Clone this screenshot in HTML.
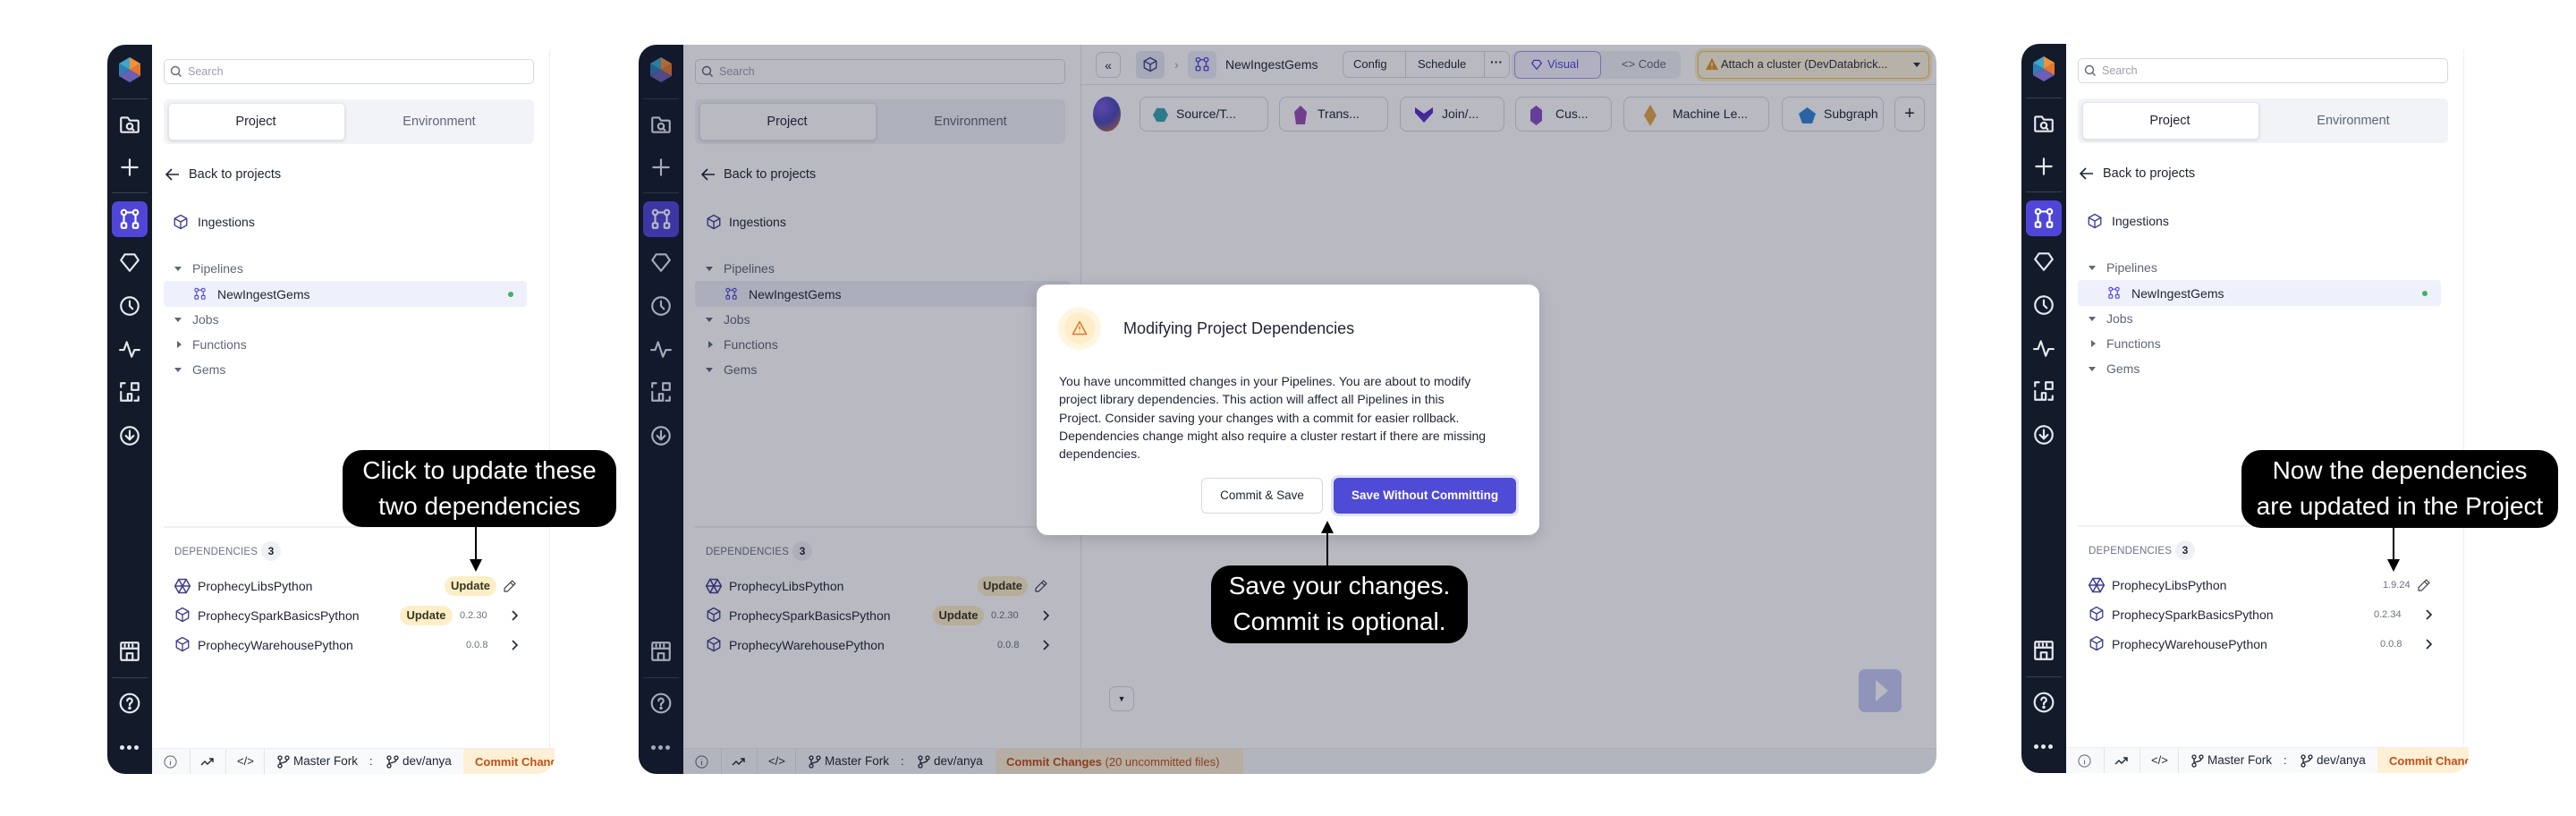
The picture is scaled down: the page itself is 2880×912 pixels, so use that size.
<!DOCTYPE html>
<html><head><meta charset="utf-8">
<style>
*{box-sizing:border-box;margin:0;padding:0}
body{width:2880px;height:912px;background:#fff;position:relative;overflow:hidden;font-family:"Liberation Sans",Arial,sans-serif;color:#1f2433}
.a{position:absolute}
.panel{position:absolute;overflow:hidden;background:#fff;border-radius:20px}
.rail{position:absolute;left:0;top:0;width:50px;height:100%;background:#131a2a}
.ri{position:absolute;left:12px;width:26px;height:26px;color:#e6e8ef}
.ri svg{width:26px;height:26px;fill:none;stroke:currentColor;stroke-width:2;stroke-linecap:round;stroke-linejoin:round}
.rsep{position:absolute;left:5px;width:40px;height:1px;background:#3a4152}
.t{position:absolute;white-space:nowrap;font-size:14px;line-height:18px}
.g{color:#5f6678}
.search{position:absolute;left:63px;top:16px;width:414px;height:28px;border:1px solid #d5d8e0;border-radius:5px;background:#fff}
.tabs{position:absolute;left:63px;top:61px;width:414px;height:50px;background:#f1f3f7;border-radius:6px}
.tabw{position:absolute;left:5px;top:4px;width:198px;height:42px;background:#fff;border-radius:5px;border:1px solid #e2e4ea;box-shadow:0 1px 3px rgba(0,0,0,.12)}
.pill{position:absolute;height:22px;border-radius:11px;background:#fcefc7;color:#3b3422;font-size:13px;line-height:22px;text-align:center;font-weight:bold}
.ver{position:absolute;font-size:11px;color:#6b7280;line-height:14px}
.status{position:absolute;left:50px;top:786px;width:450px;height:29px;background:#f8f9fb;border-top:1px solid #eceef2}
.callout{position:absolute;background:#000;color:#fff;border-radius:22px;font-size:28px;line-height:40px;text-align:center;padding-top:3px}
svg.ico{fill:none;stroke:currentColor;stroke-width:1.8;stroke-linecap:round;stroke-linejoin:round}
.btn{position:absolute;border:1px solid #d6d8df;border-radius:7px;background:#fff;font-size:13px;line-height:28px;text-align:center;color:#1f2433}
.gem{position:absolute;top:58px;height:39px;border:1px solid #d6d8df;border-radius:8px;background:#fff;font-size:14px;line-height:37px;color:#1f2433}
</style></head><body>

<!-- ================= PANEL 1 ================= -->
<div class="panel" style="left:120px;top:50px;width:500px;height:815px">
 <div class="rail">
  <svg class="a" style="left:9px;top:12px" width="32" height="32" viewBox="0 0 32 32"><polygon points="16,2 28,9 16,16" fill="#f0903a"/><polygon points="4,9 16,2 16,16" fill="#3fa7c9"/><polygon points="4,9 16,16 4,23" fill="#2d7fb6"/><polygon points="28,9 28,23 16,16" fill="#e5762e"/><polygon points="4,23 16,16 28,23 16,30" fill="#6a5fb4"/></svg>
  <div class="rsep" style="top:60px"></div>
  <div class="ri" style="top:76px"><svg viewBox="0 0 24 24"><path d="M3 7V19a1 1 0 0 0 1 1h16a1 1 0 0 0 1-1V9a1 1 0 0 0-1-1h-8l-2-3H4a1 1 0 0 0-1 1z"/><circle cx="12" cy="14" r="3"/><path d="M14 16l2 2"/></svg></div>
  <div class="ri" style="top:124px"><svg viewBox="0 0 24 24"><path d="M12 4v16M4 12h16"/></svg></div>
  <div class="rsep" style="top:165px"></div>
  <div class="a" style="left:5px;top:175px;width:40px;height:40px;background:#4f46d8;border-radius:7px"></div>
  <div class="ri" style="top:182px;color:#fff"><svg viewBox="0 0 24 24"><circle cx="6" cy="5" r="2.5"/><circle cx="18" cy="5" r="2.5"/><rect x="3.5" y="16" width="5" height="5" rx="1"/><rect x="15.5" y="16" width="5" height="5" rx="1"/><path d="M8.5 5h7M6 7.5v8.5M18 7.5v8.5"/></svg></div>
  <div class="ri" style="top:230px"><svg viewBox="0 0 24 24"><path d="M7 4h10l4 6-9 11-9-11z"/></svg></div>
  <div class="ri" style="top:279px"><svg viewBox="0 0 24 24"><circle cx="12" cy="12" r="9"/><path d="M12 7v5l3 3"/></svg></div>
  <div class="ri" style="top:327px"><svg viewBox="0 0 24 24"><path d="M2 13h4l3-8 5 15 3-7h5"/></svg></div>
  <div class="ri" style="top:375px"><svg viewBox="0 0 24 24"><path d="M3 7V3h4M3 14v-2M14 3h7v7h-7zM3 21v-6M3 21h6M21 17v4h-4M10 14h4v7h-4z"/></svg></div>
  <div class="ri" style="top:424px"><svg viewBox="0 0 24 24"><circle cx="12" cy="12" r="9"/><path d="M12 7v9M8 12l4 4 4-4"/></svg></div>
  <div class="ri" style="top:665px"><svg viewBox="0 0 24 24"><rect x="3" y="3" width="18" height="18" rx="1"/><path d="M3 9h18M7 5v2M11 5v2M15 5v2M9 21v-7h6v7"/></svg></div>
  <div class="rsep" style="top:707px"></div>
  <div class="ri" style="top:723px"><svg viewBox="0 0 24 24"><circle cx="12" cy="12" r="9.5"/><path d="M9.5 9.5a2.5 2.5 0 1 1 3.5 2.3c-.7.4-1 1-1 1.7v.5"/><circle cx="12" cy="17" r=".6" fill="currentColor"/></svg></div>
  <div class="a" style="left:14px;top:783px;width:22px;height:5px;"><span style="position:absolute;left:0;width:5px;height:5px;border-radius:3px;background:#e6e8ef"></span><span style="position:absolute;left:8px;width:5px;height:5px;border-radius:3px;background:#e6e8ef"></span><span style="position:absolute;left:16px;width:5px;height:5px;border-radius:3px;background:#e6e8ef"></span></div>
 </div>
 <div class="a" style="left:494px;top:0;width:1px;height:786px;background:#eceef2"></div>
 <div class="search"><svg class="a" style="left:6px;top:6px" width="14" height="14" viewBox="0 0 14 14" fill="none" stroke="#5f6678" stroke-width="1.4"><circle cx="6" cy="6" r="4.5"/><path d="M9.5 9.5l3 3"/></svg><span class="t" style="left:26px;top:4px;font-size:12.5px;color:#9aa0ad">Search</span></div>
 <div class="tabs"><div class="tabw"></div><span class="t" style="left:103px;top:16px;width:0;font-size:14.5px;"><span style="position:absolute;transform:translateX(-50%)">Project</span></span><span class="t g" style="left:308px;top:16px;font-size:14.5px"><span style="position:absolute;transform:translateX(-50%)">Environment</span></span></div>
 <svg class="a" style="left:65px;top:138px" width="16" height="14" viewBox="0 0 16 14" fill="none" stroke="#1f2433" stroke-width="1.6"><path d="M15 7H2M7 1L1 7l6 6"/></svg>
 <span class="t" style="left:91px;top:136px;font-size:14.5px">Back to projects</span>
 <svg class="a ico" style="left:73px;top:189px;color:#3f3f8f" width="18" height="18" viewBox="0 0 24 24"><path d="M12 2l9 5v10l-9 5-9-5V7z"/><path d="M3 7l9 5 9-5M12 12v10"/></svg>
 <span class="t" style="left:101px;top:189px">Ingestions</span>
 <span class="a" style="left:75px;top:248px;border-left:4px solid transparent;border-right:4px solid transparent;border-top:5px solid #5f6678"></span>
 <span class="t g" style="left:95px;top:241px">Pipelines</span>
 <div class="a" style="left:63px;top:264px;width:406px;height:29px;background:#eef0fb;border-radius:4px"></div>
 <svg class="a ico" style="left:96px;top:271px;color:#4f46d8" width="15" height="15" viewBox="0 0 24 24"><circle cx="6" cy="5" r="3"/><circle cx="18" cy="5" r="3"/><rect x="3" y="15" width="6" height="6" rx="1"/><rect x="15" y="15" width="6" height="6" rx="1"/><path d="M9 5h6M6 8v7M18 8v7" /></svg>
 <span class="t" style="left:123px;top:270px">NewIngestGems</span>
 <span class="a" style="left:448px;top:276px;width:6px;height:6px;border-radius:3px;background:#3cb55e"></span>
 <span class="a" style="left:75px;top:305px;border-left:4px solid transparent;border-right:4px solid transparent;border-top:5px solid #5f6678"></span>
 <span class="t g" style="left:95px;top:298px">Jobs</span>
 <span class="a" style="left:78px;top:331px;border-top:4px solid transparent;border-bottom:4px solid transparent;border-left:5px solid #5f6678"></span>
 <span class="t g" style="left:95px;top:326px">Functions</span>
 <span class="a" style="left:75px;top:361px;border-left:4px solid transparent;border-right:4px solid transparent;border-top:5px solid #5f6678"></span>
 <span class="t g" style="left:95px;top:354px">Gems</span>
 <div class="a" style="left:63px;top:538px;width:431px;height:2px;background:#eef0f3"></div>
 <span class="t" style="left:75px;top:558px;font-size:11.5px;color:#6b7385;letter-spacing:.2px">DEPENDENCIES</span>
 <span class="a" style="left:172px;top:555px;width:22px;height:22px;border-radius:11px;background:#eef0f4;font-size:12px;line-height:22px;text-align:center;font-weight:bold">3</span>
 <svg class="a ico" style="left:74px;top:595px;color:#3f3f8f" width="20" height="20" viewBox="0 0 24 24"><path d="M7 3h10l5 9-5 9H7l-5-9z"/><path d="M7 3l10 18M17 3L7 21M2 12h20" /></svg>
 <span class="t" style="left:101px;top:596px">ProphecyLibsPython</span>
 <div class="pill" style="left:377px;top:594px;width:58px">Update</div>
 <svg class="a ico" style="left:442px;top:597px;color:#3a3f4d" width="16" height="16" viewBox="0 0 24 24"><path d="M16 3l5 5L8 21H3v-5z M13 6l5 5"/></svg>
 <svg class="a ico" style="left:75px;top:628px;color:#3f3f8f" width="18" height="18" viewBox="0 0 24 24"><path d="M12 2l9 5v10l-9 5-9-5V7z"/><path d="M3 7l9 5 9-5M12 12v10"/></svg>
 <span class="t" style="left:101px;top:629px">ProphecySparkBasicsPython</span>
 <div class="pill" style="left:327px;top:627px;width:59px">Update</div>
 <span class="ver" style="left:394px;top:631px">0.2.30</span>
 <svg class="a" style="left:450px;top:632px" width="10" height="12" viewBox="0 0 10 12" fill="none" stroke="#1f2433" stroke-width="1.6"><path d="M3 1l5 5-5 5"/></svg>
 <svg class="a ico" style="left:75px;top:661px;color:#3f3f8f" width="18" height="18" viewBox="0 0 24 24"><path d="M12 2l9 5v10l-9 5-9-5V7z"/><path d="M3 7l9 5 9-5M12 12v10"/></svg>
 <span class="t" style="left:101px;top:662px">ProphecyWarehousePython</span>
 <span class="ver" style="left:401px;top:664px">0.0.8</span>
 <svg class="a" style="left:450px;top:665px" width="10" height="12" viewBox="0 0 10 12" fill="none" stroke="#1f2433" stroke-width="1.6"><path d="M3 1l5 5-5 5"/></svg>
 <div class="status">
  <svg class="a" style="left:13px;top:7px" width="15" height="15" viewBox="0 0 16 16" fill="none" stroke="#6b7280" stroke-width="1.2"><circle cx="8" cy="8" r="7"/><path d="M8 7v5M8 4.5v.5"/></svg>
  <div class="a" style="left:42px;top:0;width:1px;height:29px;background:#e3e5ea"></div>
  <svg class="a" style="left:54px;top:8px" width="16" height="12" viewBox="0 0 16 12" fill="none" stroke="#1f2433" stroke-width="1.4"><path d="M1 10l4-4 3 3 6-6M10 3h4v4"/></svg>
  <div class="a" style="left:82px;top:0;width:1px;height:29px;background:#e3e5ea"></div>
  <span class="t" style="left:95px;top:5px;font-size:13px">&lt;/&gt;</span>
  <div class="a" style="left:125px;top:0;width:1px;height:29px;background:#e3e5ea"></div>
  <svg class="a" style="left:140px;top:7px" width="14" height="15" viewBox="0 0 14 15" fill="none" stroke="#1f2433" stroke-width="1.3"><circle cx="3" cy="3" r="2"/><circle cx="11" cy="3" r="2"/><circle cx="3" cy="12" r="2"/><path d="M3 5v5M11 5c0 4-8 3-8 5"/></svg>
  <span class="t" style="left:158px;top:5px;font-size:13.5px">Master Fork</span>
  <span class="t" style="left:243px;top:5px;font-size:13px">:</span>
  <svg class="a" style="left:262px;top:7px" width="14" height="15" viewBox="0 0 14 15" fill="none" stroke="#1f2433" stroke-width="1.3"><circle cx="3" cy="3" r="2"/><circle cx="11" cy="3" r="2"/><circle cx="3" cy="12" r="2"/><path d="M3 5v5M11 5c0 4-8 3-8 5"/></svg>
  <span class="t" style="left:280px;top:5px;font-size:13.5px">dev/anya</span>
  <div class="a" style="left:348px;top:0;width:110px;height:29px;background:#fdf0d5"></div>
  <span class="t" style="left:361px;top:6px;font-size:13px;font-weight:bold;color:#c2501a">Commit Changes</span>
 </div>
</div>

<!-- ================= PANEL 3 ================= -->
<div class="panel" style="left:2260px;top:49px;width:500px;height:815px">
 <div class="rail">
  <svg class="a" style="left:9px;top:12px" width="32" height="32" viewBox="0 0 32 32"><polygon points="16,2 28,9 16,16" fill="#f0903a"/><polygon points="4,9 16,2 16,16" fill="#3fa7c9"/><polygon points="4,9 16,16 4,23" fill="#2d7fb6"/><polygon points="28,9 28,23 16,16" fill="#e5762e"/><polygon points="4,23 16,16 28,23 16,30" fill="#6a5fb4"/></svg>
  <div class="rsep" style="top:60px"></div>
  <div class="ri" style="top:76px"><svg viewBox="0 0 24 24"><path d="M3 7V19a1 1 0 0 0 1 1h16a1 1 0 0 0 1-1V9a1 1 0 0 0-1-1h-8l-2-3H4a1 1 0 0 0-1 1z"/><circle cx="12" cy="14" r="3"/><path d="M14 16l2 2"/></svg></div>
  <div class="ri" style="top:124px"><svg viewBox="0 0 24 24"><path d="M12 4v16M4 12h16"/></svg></div>
  <div class="rsep" style="top:165px"></div>
  <div class="a" style="left:5px;top:175px;width:40px;height:40px;background:#4f46d8;border-radius:7px"></div>
  <div class="ri" style="top:182px;color:#fff"><svg viewBox="0 0 24 24"><circle cx="6" cy="5" r="2.5"/><circle cx="18" cy="5" r="2.5"/><rect x="3.5" y="16" width="5" height="5" rx="1"/><rect x="15.5" y="16" width="5" height="5" rx="1"/><path d="M8.5 5h7M6 7.5v8.5M18 7.5v8.5"/></svg></div>
  <div class="ri" style="top:230px"><svg viewBox="0 0 24 24"><path d="M7 4h10l4 6-9 11-9-11z"/></svg></div>
  <div class="ri" style="top:279px"><svg viewBox="0 0 24 24"><circle cx="12" cy="12" r="9"/><path d="M12 7v5l3 3"/></svg></div>
  <div class="ri" style="top:327px"><svg viewBox="0 0 24 24"><path d="M2 13h4l3-8 5 15 3-7h5"/></svg></div>
  <div class="ri" style="top:375px"><svg viewBox="0 0 24 24"><path d="M3 7V3h4M3 14v-2M14 3h7v7h-7zM3 21v-6M3 21h6M21 17v4h-4M10 14h4v7h-4z"/></svg></div>
  <div class="ri" style="top:424px"><svg viewBox="0 0 24 24"><circle cx="12" cy="12" r="9"/><path d="M12 7v9M8 12l4 4 4-4"/></svg></div>
  <div class="ri" style="top:665px"><svg viewBox="0 0 24 24"><rect x="3" y="3" width="18" height="18" rx="1"/><path d="M3 9h18M7 5v2M11 5v2M15 5v2M9 21v-7h6v7"/></svg></div>
  <div class="rsep" style="top:707px"></div>
  <div class="ri" style="top:723px"><svg viewBox="0 0 24 24"><circle cx="12" cy="12" r="9.5"/><path d="M9.5 9.5a2.5 2.5 0 1 1 3.5 2.3c-.7.4-1 1-1 1.7v.5"/><circle cx="12" cy="17" r=".6" fill="currentColor"/></svg></div>
  <div class="a" style="left:14px;top:783px;width:22px;height:5px;"><span style="position:absolute;left:0;width:5px;height:5px;border-radius:3px;background:#e6e8ef"></span><span style="position:absolute;left:8px;width:5px;height:5px;border-radius:3px;background:#e6e8ef"></span><span style="position:absolute;left:16px;width:5px;height:5px;border-radius:3px;background:#e6e8ef"></span></div>
 </div>
 <div class="a" style="left:494px;top:0;width:1px;height:786px;background:#eceef2"></div>
 <div class="search"><svg class="a" style="left:6px;top:6px" width="14" height="14" viewBox="0 0 14 14" fill="none" stroke="#5f6678" stroke-width="1.4"><circle cx="6" cy="6" r="4.5"/><path d="M9.5 9.5l3 3"/></svg><span class="t" style="left:26px;top:4px;font-size:12.5px;color:#9aa0ad">Search</span></div>
 <div class="tabs"><div class="tabw"></div><span class="t" style="left:103px;top:16px;font-size:14.5px;"><span style="position:absolute;transform:translateX(-50%)">Project</span></span><span class="t g" style="left:308px;top:16px;font-size:14.5px"><span style="position:absolute;transform:translateX(-50%)">Environment</span></span></div>
 <svg class="a" style="left:65px;top:138px" width="16" height="14" viewBox="0 0 16 14" fill="none" stroke="#1f2433" stroke-width="1.6"><path d="M15 7H2M7 1L1 7l6 6"/></svg>
 <span class="t" style="left:91px;top:136px;font-size:14.5px">Back to projects</span>
 <svg class="a ico" style="left:73px;top:189px;color:#3f3f8f" width="18" height="18" viewBox="0 0 24 24"><path d="M12 2l9 5v10l-9 5-9-5V7z"/><path d="M3 7l9 5 9-5M12 12v10"/></svg>
 <span class="t" style="left:101px;top:189px">Ingestions</span>
 <span class="a" style="left:75px;top:248px;border-left:4px solid transparent;border-right:4px solid transparent;border-top:5px solid #5f6678"></span>
 <span class="t g" style="left:95px;top:241px">Pipelines</span>
 <div class="a" style="left:63px;top:264px;width:406px;height:29px;background:#eef0fb;border-radius:4px"></div>
 <svg class="a ico" style="left:96px;top:271px;color:#4f46d8" width="15" height="15" viewBox="0 0 24 24"><circle cx="6" cy="5" r="3"/><circle cx="18" cy="5" r="3"/><rect x="3" y="15" width="6" height="6" rx="1"/><rect x="15" y="15" width="6" height="6" rx="1"/><path d="M9 5h6M6 8v7M18 8v7" /></svg>
 <span class="t" style="left:123px;top:270px">NewIngestGems</span>
 <span class="a" style="left:448px;top:276px;width:6px;height:6px;border-radius:3px;background:#3cb55e"></span>
 <span class="a" style="left:75px;top:305px;border-left:4px solid transparent;border-right:4px solid transparent;border-top:5px solid #5f6678"></span>
 <span class="t g" style="left:95px;top:298px">Jobs</span>
 <span class="a" style="left:78px;top:331px;border-top:4px solid transparent;border-bottom:4px solid transparent;border-left:5px solid #5f6678"></span>
 <span class="t g" style="left:95px;top:326px">Functions</span>
 <span class="a" style="left:75px;top:361px;border-left:4px solid transparent;border-right:4px solid transparent;border-top:5px solid #5f6678"></span>
 <span class="t g" style="left:95px;top:354px">Gems</span>
 <div class="a" style="left:63px;top:538px;width:431px;height:2px;background:#eef0f3"></div>
 <span class="t" style="left:75px;top:558px;font-size:11.5px;color:#6b7385;letter-spacing:.2px">DEPENDENCIES</span>
 <span class="a" style="left:172px;top:555px;width:22px;height:22px;border-radius:11px;background:#eef0f4;font-size:12px;line-height:22px;text-align:center;font-weight:bold">3</span>
 <svg class="a ico" style="left:74px;top:595px;color:#3f3f8f" width="20" height="20" viewBox="0 0 24 24"><path d="M7 3h10l5 9-5 9H7l-5-9z"/><path d="M7 3l10 18M17 3L7 21M2 12h20" /></svg>
 <span class="t" style="left:101px;top:596px">ProphecyLibsPython</span>
 <span class="ver" style="left:404px;top:598px">1.9.24</span>
 <svg class="a ico" style="left:442px;top:597px;color:#3a3f4d" width="16" height="16" viewBox="0 0 24 24"><path d="M16 3l5 5L8 21H3v-5z M13 6l5 5"/></svg>
 <svg class="a ico" style="left:75px;top:628px;color:#3f3f8f" width="18" height="18" viewBox="0 0 24 24"><path d="M12 2l9 5v10l-9 5-9-5V7z"/><path d="M3 7l9 5 9-5M12 12v10"/></svg>
 <span class="t" style="left:101px;top:629px">ProphecySparkBasicsPython</span>
 <span class="ver" style="left:394px;top:631px">0.2.34</span>
 <svg class="a" style="left:450px;top:632px" width="10" height="12" viewBox="0 0 10 12" fill="none" stroke="#1f2433" stroke-width="1.6"><path d="M3 1l5 5-5 5"/></svg>
 <svg class="a ico" style="left:75px;top:661px;color:#3f3f8f" width="18" height="18" viewBox="0 0 24 24"><path d="M12 2l9 5v10l-9 5-9-5V7z"/><path d="M3 7l9 5 9-5M12 12v10"/></svg>
 <span class="t" style="left:101px;top:662px">ProphecyWarehousePython</span>
 <span class="ver" style="left:401px;top:664px">0.0.8</span>
 <svg class="a" style="left:450px;top:665px" width="10" height="12" viewBox="0 0 10 12" fill="none" stroke="#1f2433" stroke-width="1.6"><path d="M3 1l5 5-5 5"/></svg>
 <div class="status">
  <svg class="a" style="left:13px;top:7px" width="15" height="15" viewBox="0 0 16 16" fill="none" stroke="#6b7280" stroke-width="1.2"><circle cx="8" cy="8" r="7"/><path d="M8 7v5M8 4.5v.5"/></svg>
  <div class="a" style="left:42px;top:0;width:1px;height:29px;background:#e3e5ea"></div>
  <svg class="a" style="left:54px;top:8px" width="16" height="12" viewBox="0 0 16 12" fill="none" stroke="#1f2433" stroke-width="1.4"><path d="M1 10l4-4 3 3 6-6M10 3h4v4"/></svg>
  <div class="a" style="left:82px;top:0;width:1px;height:29px;background:#e3e5ea"></div>
  <span class="t" style="left:95px;top:5px;font-size:13px">&lt;/&gt;</span>
  <div class="a" style="left:125px;top:0;width:1px;height:29px;background:#e3e5ea"></div>
  <svg class="a" style="left:140px;top:7px" width="14" height="15" viewBox="0 0 14 15" fill="none" stroke="#1f2433" stroke-width="1.3"><circle cx="3" cy="3" r="2"/><circle cx="11" cy="3" r="2"/><circle cx="3" cy="12" r="2"/><path d="M3 5v5M11 5c0 4-8 3-8 5"/></svg>
  <span class="t" style="left:158px;top:5px;font-size:13.5px">Master Fork</span>
  <span class="t" style="left:243px;top:5px;font-size:13px">:</span>
  <svg class="a" style="left:262px;top:7px" width="14" height="15" viewBox="0 0 14 15" fill="none" stroke="#1f2433" stroke-width="1.3"><circle cx="3" cy="3" r="2"/><circle cx="11" cy="3" r="2"/><circle cx="3" cy="12" r="2"/><path d="M3 5v5M11 5c0 4-8 3-8 5"/></svg>
  <span class="t" style="left:280px;top:5px;font-size:13.5px">dev/anya</span>
  <div class="a" style="left:348px;top:0;width:110px;height:29px;background:#fdf0d5"></div>
  <span class="t" style="left:361px;top:6px;font-size:13px;font-weight:bold;color:#c2501a">Commit Changes</span>
 </div>
</div>

<!-- ================= PANEL 2 ================= -->
<div class="panel" style="left:714px;top:50px;width:1451px;height:815px">
 <div class="rail">
  <svg class="a" style="left:9px;top:12px" width="32" height="32" viewBox="0 0 32 32"><polygon points="16,2 28,9 16,16" fill="#f0903a"/><polygon points="4,9 16,2 16,16" fill="#3fa7c9"/><polygon points="4,9 16,16 4,23" fill="#2d7fb6"/><polygon points="28,9 28,23 16,16" fill="#e5762e"/><polygon points="4,23 16,16 28,23 16,30" fill="#6a5fb4"/></svg>
  <div class="rsep" style="top:60px"></div>
  <div class="ri" style="top:76px"><svg viewBox="0 0 24 24"><path d="M3 7V19a1 1 0 0 0 1 1h16a1 1 0 0 0 1-1V9a1 1 0 0 0-1-1h-8l-2-3H4a1 1 0 0 0-1 1z"/><circle cx="12" cy="14" r="3"/><path d="M14 16l2 2"/></svg></div>
  <div class="ri" style="top:124px"><svg viewBox="0 0 24 24"><path d="M12 4v16M4 12h16"/></svg></div>
  <div class="rsep" style="top:165px"></div>
  <div class="a" style="left:5px;top:175px;width:40px;height:40px;background:#4f46d8;border-radius:7px"></div>
  <div class="ri" style="top:182px;color:#fff"><svg viewBox="0 0 24 24"><circle cx="6" cy="5" r="2.5"/><circle cx="18" cy="5" r="2.5"/><rect x="3.5" y="16" width="5" height="5" rx="1"/><rect x="15.5" y="16" width="5" height="5" rx="1"/><path d="M8.5 5h7M6 7.5v8.5M18 7.5v8.5"/></svg></div>
  <div class="ri" style="top:230px"><svg viewBox="0 0 24 24"><path d="M7 4h10l4 6-9 11-9-11z"/></svg></div>
  <div class="ri" style="top:279px"><svg viewBox="0 0 24 24"><circle cx="12" cy="12" r="9"/><path d="M12 7v5l3 3"/></svg></div>
  <div class="ri" style="top:327px"><svg viewBox="0 0 24 24"><path d="M2 13h4l3-8 5 15 3-7h5"/></svg></div>
  <div class="ri" style="top:375px"><svg viewBox="0 0 24 24"><path d="M3 7V3h4M3 14v-2M14 3h7v7h-7zM3 21v-6M3 21h6M21 17v4h-4M10 14h4v7h-4z"/></svg></div>
  <div class="ri" style="top:424px"><svg viewBox="0 0 24 24"><circle cx="12" cy="12" r="9"/><path d="M12 7v9M8 12l4 4 4-4"/></svg></div>
  <div class="ri" style="top:665px"><svg viewBox="0 0 24 24"><rect x="3" y="3" width="18" height="18" rx="1"/><path d="M3 9h18M7 5v2M11 5v2M15 5v2M9 21v-7h6v7"/></svg></div>
  <div class="rsep" style="top:707px"></div>
  <div class="ri" style="top:723px"><svg viewBox="0 0 24 24"><circle cx="12" cy="12" r="9.5"/><path d="M9.5 9.5a2.5 2.5 0 1 1 3.5 2.3c-.7.4-1 1-1 1.7v.5"/><circle cx="12" cy="17" r=".6" fill="currentColor"/></svg></div>
  <div class="a" style="left:14px;top:783px;width:22px;height:5px;"><span style="position:absolute;left:0;width:5px;height:5px;border-radius:3px;background:#e6e8ef"></span><span style="position:absolute;left:8px;width:5px;height:5px;border-radius:3px;background:#e6e8ef"></span><span style="position:absolute;left:16px;width:5px;height:5px;border-radius:3px;background:#e6e8ef"></span></div>
 </div>
 <div class="a" style="left:494px;top:0;width:1px;height:786px;background:#e3e5ea"></div>
 <div class="search"><svg class="a" style="left:6px;top:6px" width="14" height="14" viewBox="0 0 14 14" fill="none" stroke="#5f6678" stroke-width="1.4"><circle cx="6" cy="6" r="4.5"/><path d="M9.5 9.5l3 3"/></svg><span class="t" style="left:26px;top:4px;font-size:12.5px;color:#9aa0ad">Search</span></div>
 <div class="tabs"><div class="tabw"></div><span class="t" style="left:103px;top:16px;font-size:14.5px;"><span style="position:absolute;transform:translateX(-50%)">Project</span></span><span class="t g" style="left:308px;top:16px;font-size:14.5px"><span style="position:absolute;transform:translateX(-50%)">Environment</span></span></div>
 <svg class="a" style="left:70px;top:138px" width="16" height="14" viewBox="0 0 16 14" fill="none" stroke="#1f2433" stroke-width="1.6"><path d="M15 7H2M7 1L1 7l6 6"/></svg>
 <span class="t" style="left:95px;top:136px;font-size:14.5px">Back to projects</span>
 <svg class="a ico" style="left:75px;top:189px;color:#3f3f8f" width="18" height="18" viewBox="0 0 24 24"><path d="M12 2l9 5v10l-9 5-9-5V7z"/><path d="M3 7l9 5 9-5M12 12v10"/></svg>
 <span class="t" style="left:101px;top:189px">Ingestions</span>
 <span class="a" style="left:75px;top:248px;border-left:4px solid transparent;border-right:4px solid transparent;border-top:5px solid #5f6678"></span>
 <span class="t g" style="left:95px;top:241px">Pipelines</span>
 <div class="a" style="left:63px;top:264px;width:420px;height:29px;background:#eef0f6;border-radius:4px"></div>
 <svg class="a ico" style="left:96px;top:271px;color:#4f46d8" width="15" height="15" viewBox="0 0 24 24"><circle cx="6" cy="5" r="3"/><circle cx="18" cy="5" r="3"/><rect x="3" y="15" width="6" height="6" rx="1"/><rect x="15" y="15" width="6" height="6" rx="1"/><path d="M9 5h6M6 8v7M18 8v7" /></svg>
 <span class="t" style="left:123px;top:270px">NewIngestGems</span>
 <span class="a" style="left:75px;top:305px;border-left:4px solid transparent;border-right:4px solid transparent;border-top:5px solid #5f6678"></span>
 <span class="t g" style="left:95px;top:298px">Jobs</span>
 <span class="a" style="left:78px;top:331px;border-top:4px solid transparent;border-bottom:4px solid transparent;border-left:5px solid #5f6678"></span>
 <span class="t g" style="left:95px;top:326px">Functions</span>
 <span class="a" style="left:75px;top:361px;border-left:4px solid transparent;border-right:4px solid transparent;border-top:5px solid #5f6678"></span>
 <span class="t g" style="left:95px;top:354px">Gems</span>
 <div class="a" style="left:63px;top:538px;width:431px;height:2px;background:#eef0f3"></div>
 <span class="t" style="left:75px;top:558px;font-size:11.5px;color:#6b7385;letter-spacing:.2px">DEPENDENCIES</span>
 <span class="a" style="left:172px;top:555px;width:22px;height:22px;border-radius:11px;background:#eef0f4;font-size:12px;line-height:22px;text-align:center;font-weight:bold">3</span>
 <svg class="a ico" style="left:74px;top:595px;color:#3f3f8f" width="20" height="20" viewBox="0 0 24 24"><path d="M7 3h10l5 9-5 9H7l-5-9z"/><path d="M7 3l10 18M17 3L7 21M2 12h20" /></svg>
 <span class="t" style="left:101px;top:596px">ProphecyLibsPython</span>
 <div class="pill" style="left:379px;top:594px;width:56px">Update</div>
 <svg class="a ico" style="left:442px;top:597px;color:#3a3f4d" width="16" height="16" viewBox="0 0 24 24"><path d="M16 3l5 5L8 21H3v-5z M13 6l5 5"/></svg>
 <svg class="a ico" style="left:75px;top:628px;color:#3f3f8f" width="18" height="18" viewBox="0 0 24 24"><path d="M12 2l9 5v10l-9 5-9-5V7z"/><path d="M3 7l9 5 9-5M12 12v10"/></svg>
 <span class="t" style="left:101px;top:629px">ProphecySparkBasicsPython</span>
 <div class="pill" style="left:329px;top:627px;width:57px">Update</div>
 <span class="ver" style="left:394px;top:631px">0.2.30</span>
 <svg class="a" style="left:450px;top:632px" width="10" height="12" viewBox="0 0 10 12" fill="none" stroke="#1f2433" stroke-width="1.6"><path d="M3 1l5 5-5 5"/></svg>
 <svg class="a ico" style="left:75px;top:661px;color:#3f3f8f" width="18" height="18" viewBox="0 0 24 24"><path d="M12 2l9 5v10l-9 5-9-5V7z"/><path d="M3 7l9 5 9-5M12 12v10"/></svg>
 <span class="t" style="left:101px;top:662px">ProphecyWarehousePython</span>
 <span class="ver" style="left:401px;top:664px">0.0.8</span>
 <svg class="a" style="left:450px;top:665px" width="10" height="12" viewBox="0 0 10 12" fill="none" stroke="#1f2433" stroke-width="1.6"><path d="M3 1l5 5-5 5"/></svg>

 <!-- main header -->
 <div class="a" style="left:495px;top:44px;width:956px;height:1px;background:#e6e8ec"></div>
 <div class="btn" style="left:511px;top:8px;width:28px;height:29px;font-size:14px">«</div>
 <div class="a" style="left:556px;top:7px;width:32px;height:31px;background:#e6e8f3;border-radius:6px"></div>
 <svg class="a ico" style="left:563px;top:13px;color:#3f3f8f" width="18" height="18" viewBox="0 0 24 24"><path d="M12 2l9 5v10l-9 5-9-5V7z"/><path d="M3 7l9 5 9-5M12 12v10"/></svg>
 <span class="t" style="left:599px;top:13px;color:#9aa0ad">›</span>
 <div class="a" style="left:614px;top:7px;width:32px;height:31px;background:#eceef8;border-radius:6px"></div>
 <svg class="a ico" style="left:621px;top:13px;color:#4f46d8" width="18" height="18" viewBox="0 0 24 24"><circle cx="6" cy="5" r="3"/><circle cx="18" cy="5" r="3"/><rect x="3" y="15" width="6" height="6" rx="1"/><rect x="15" y="15" width="6" height="6" rx="1"/><path d="M9 5h6M6 8v7M18 8v7" /></svg>
 <span class="t" style="left:656px;top:13px;font-size:14px">NewIngestGems</span>
 <div class="btn" style="left:787px;top:7px;width:187px;height:30px"></div>
 <span class="t" style="left:799px;top:13px;font-size:13px">Config</span>
 <div class="a" style="left:857px;top:8px;width:1px;height:28px;background:#d6d8df"></div>
 <span class="t" style="left:871px;top:13px;font-size:13px">Schedule</span>
 <div class="a" style="left:945px;top:8px;width:1px;height:28px;background:#d6d8df"></div>
 <span class="t" style="left:952px;top:10px;font-size:14px;font-weight:bold">···</span>
 <div class="a" style="left:976px;top:7px;width:189px;height:31px;background:#f0f1f5;border-radius:7px"></div>
 <div class="a" style="left:979px;top:7px;width:97px;height:31px;background:#f4f3ff;border:1px solid #9f99ee;border-radius:7px"></div>
 <svg class="a" style="left:997px;top:15px" width="14" height="14" viewBox="0 0 24 24" fill="none" stroke="#4f46d8" stroke-width="2.2"><path d="M7 4h10l4 6-9 11-9-11z"/></svg>
 <span class="t" style="left:1016px;top:13px;font-size:13px;color:#4f46d8">Visual</span>
 <span class="t" style="left:1099px;top:13px;font-size:13px;color:#5f6678">&lt;&gt; Code</span>
 <div class="a" style="left:1184px;top:7px;width:259px;height:31px;background:#fdf5dd;border:1px solid #edc35a;border-radius:7px;box-shadow:0 0 0 3px #fbeec4"></div>
 <svg class="a" style="left:1193px;top:15px" width="14" height="13" viewBox="0 0 14 13"><path d="M7 0l7 13H0z" fill="#e0952a"/><path d="M7 5v4M7 10.5v1" stroke="#fff" stroke-width="1.3"/></svg>
 <span class="t" style="left:1210px;top:13px;font-size:13px;color:#2b2f3a">Attach a cluster (DevDatabrick...</span>
 <span class="a" style="left:1425px;top:20px;border-left:4px solid transparent;border-right:4px solid transparent;border-top:5px solid #2b2f3a"></span>
 <!-- gem bar -->
 <div class="a" style="left:508px;top:58px;width:31px;height:39px;border-radius:50%;background:radial-gradient(circle at 30% 30%,#7d5de0,#4a4bb8 50%,#e5762e 100%)"></div>
 <div class="gem" style="left:560px;width:144px"><svg class="a" style="left:14px;top:11px" width="17" height="17" viewBox="0 0 20 20"><polygon points="5,1 15,1 20,10 15,19 5,19 0,10" fill="#3aa5b0"/></svg><span class="a" style="left:40px">Source/T...</span></div>
 <div class="gem" style="left:716px;width:122px"><svg class="a" style="left:16px;top:9px" width="14" height="21" viewBox="0 0 14 21"><polygon points="7,0 14,7 12,21 2,21 0,7" fill="#9b4fb7"/></svg><span class="a" style="left:42px">Trans...</span></div>
 <div class="gem" style="left:851px;width:117px"><svg class="a" style="left:16px;top:11px" width="20" height="17" viewBox="0 0 20 17"><polygon points="0,0 10,7 20,0 20,6 10,17 0,6" fill="#5a2fc7"/></svg><span class="a" style="left:46px">Join/...</span></div>
 <div class="gem" style="left:980px;width:108px"><svg class="a" style="left:16px;top:9px" width="13" height="22" viewBox="0 0 13 22"><polygon points="6.5,0 13,5 13,17 6.5,22 0,17 0,5" fill="#8a4fc7"/></svg><span class="a" style="left:44px">Cus...</span></div>
 <div class="gem" style="left:1101px;width:163px"><svg class="a" style="left:22px;top:8px" width="14" height="24" viewBox="0 0 14 24"><polygon points="7,0 14,12 7,24 0,12" fill="#e6a747"/></svg><span class="a" style="left:54px">Machine Le...</span></div>
 <div class="gem" style="left:1278px;width:114px"><svg class="a" style="left:18px;top:11px" width="19" height="18" viewBox="0 0 19 18"><polygon points="9.5,0 19,7 15,18 4,18 0,7" fill="#3384d6"/></svg><span class="a" style="left:46px">Subgraph</span></div>
 <div class="gem" style="left:1404px;width:34px;text-align:center;font-size:20px">+</div>
 <div class="btn" style="left:526px;top:717px;width:28px;height:28px;font-size:9px;line-height:26px">▼</div>
 <div class="a" style="left:1364px;top:698px;width:48px;height:48px;background:#c6cbf5;border-radius:7px"></div>
 <span class="a" style="left:1383px;top:710px;border-top:12px solid transparent;border-bottom:12px solid transparent;border-left:14px solid #fff"></span>
 <!-- status -->
 <div class="status" style="width:1401px">
  <svg class="a" style="left:13px;top:7px" width="15" height="15" viewBox="0 0 16 16" fill="none" stroke="#6b7280" stroke-width="1.2"><circle cx="8" cy="8" r="7"/><path d="M8 7v5M8 4.5v.5"/></svg>
  <div class="a" style="left:42px;top:0;width:1px;height:29px;background:#e3e5ea"></div>
  <svg class="a" style="left:54px;top:8px" width="16" height="12" viewBox="0 0 16 12" fill="none" stroke="#1f2433" stroke-width="1.4"><path d="M1 10l4-4 3 3 6-6M10 3h4v4"/></svg>
  <div class="a" style="left:82px;top:0;width:1px;height:29px;background:#e3e5ea"></div>
  <span class="t" style="left:95px;top:5px;font-size:13px">&lt;/&gt;</span>
  <div class="a" style="left:125px;top:0;width:1px;height:29px;background:#e3e5ea"></div>
  <svg class="a" style="left:140px;top:7px" width="14" height="15" viewBox="0 0 14 15" fill="none" stroke="#1f2433" stroke-width="1.3"><circle cx="3" cy="3" r="2"/><circle cx="11" cy="3" r="2"/><circle cx="3" cy="12" r="2"/><path d="M3 5v5M11 5c0 4-8 3-8 5"/></svg>
  <span class="t" style="left:158px;top:5px;font-size:13.5px">Master Fork</span>
  <span class="t" style="left:243px;top:5px;font-size:13px">:</span>
  <svg class="a" style="left:262px;top:7px" width="14" height="15" viewBox="0 0 14 15" fill="none" stroke="#1f2433" stroke-width="1.3"><circle cx="3" cy="3" r="2"/><circle cx="11" cy="3" r="2"/><circle cx="3" cy="12" r="2"/><path d="M3 5v5M11 5c0 4-8 3-8 5"/></svg>
  <span class="t" style="left:280px;top:5px;font-size:13.5px">dev/anya</span>
  <div class="a" style="left:349px;top:0;width:277px;height:29px;background:#fdf0d5"></div>
  <span class="t" style="left:361px;top:6px;font-size:13px;color:#c2501a"><b>Commit Changes</b> (20 uncommitted files)</span>
 </div>
 <!-- overlay -->
 <div class="a" style="left:0;top:0;width:1451px;height:815px;background:rgba(20,24,50,0.3)"></div>
</div>

<!-- modal -->
<div class="a" style="left:1159px;top:318px;width:562px;height:280px;background:#fff;border-radius:12px;box-shadow:0 4px 16px rgba(0,0,0,.15)">
 <div class="a" style="left:24px;top:25px;width:48px;height:48px;border-radius:24px;background:#fef6e0"></div>
 <div class="a" style="left:31px;top:32px;width:34px;height:34px;border-radius:17px;background:#fdedc8"></div>
 <svg class="a" style="left:39px;top:40px" width="18" height="17" viewBox="0 0 18 17" fill="none" stroke="#e0762a" stroke-width="1.5" stroke-linejoin="round"><path d="M9 1.5l7.5 14h-15z"/><path d="M9 6.5v4M9 12.5v.6"/></svg>
 <span class="t" style="left:97px;top:38px;font-size:18px;line-height:22px;color:#1f2433">Modifying Project Dependencies</span>
 <div class="a" style="left:25px;top:98px;width:530px;font-size:14px;line-height:20.3px;color:#1f2433;white-space:nowrap">You have uncommitted changes in your Pipelines. You are about to modify<br>project library dependencies. This action will affect all Pipelines in this<br>Project. Consider saving your changes with a commit for easier rollback.<br>Dependencies change might also require a cluster restart if there are missing<br>dependencies.</div>
 <div class="a" style="left:184px;top:216px;width:136px;height:40px;border:1px solid #d6d8df;border-radius:6px;font-size:13.5px;line-height:38px;text-align:center">Commit &amp; Save</div>
 <div class="a" style="left:329px;top:213px;width:210px;height:46px;border-radius:8px;background:#e2e3fb"></div>
 <div class="a" style="left:332px;top:216px;width:204px;height:40px;border-radius:6px;background:#4f4bd6;color:#fff;font-size:13.5px;line-height:40px;text-align:center;font-weight:bold">Save Without Committing</div>
</div>

<!-- callouts -->
<div class="callout" style="left:383px;top:503px;width:306px;height:86px">Click to update these<br>two dependencies</div>
<div class="a" style="left:531px;top:589px;width:2px;height:38px;background:#000"></div>
<span class="a" style="left:525px;top:625px;border-left:7px solid transparent;border-right:7px solid transparent;border-top:14px solid #000"></span>

<div class="callout" style="left:1354px;top:632px;width:287px;height:87px">Save your changes.<br>Commit is optional.</div>
<div class="a" style="left:1483px;top:595px;width:2px;height:37px;background:#000"></div>
<span class="a" style="left:1477px;top:582px;border-left:7px solid transparent;border-right:7px solid transparent;border-bottom:14px solid #000"></span>

<div class="callout" style="left:2506px;top:503px;width:354px;height:87px">Now the dependencies<br>are updated in the Project</div>
<div class="a" style="left:2675px;top:590px;width:2px;height:37px;background:#000"></div>
<span class="a" style="left:2669px;top:625px;border-left:7px solid transparent;border-right:7px solid transparent;border-top:14px solid #000"></span>

</body></html>
